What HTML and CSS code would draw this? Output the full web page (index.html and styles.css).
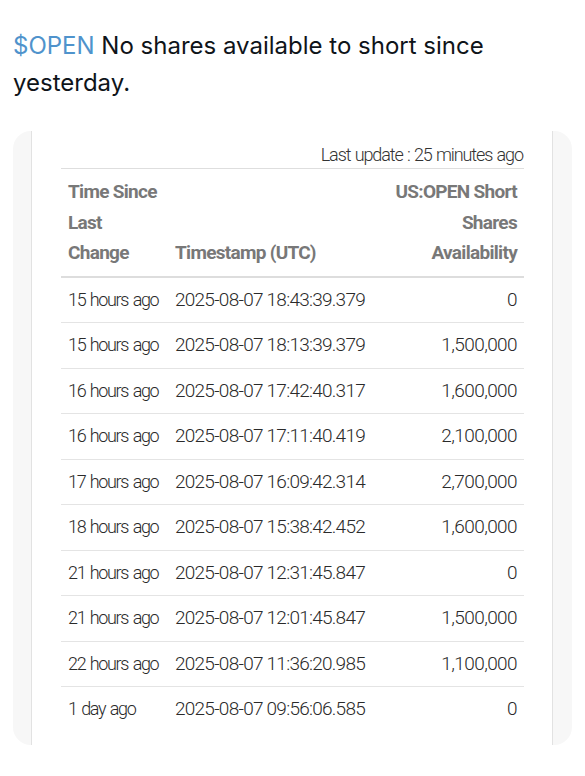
FILE: index.html
```html
<!DOCTYPE html>
<html>
<head>
<meta charset="utf-8">
<link rel="stylesheet" href="styles.css">
</head>
<body>
<div class="tweet">
  <p class="tweet-text"><span class="cashtag">$OPEN</span> <span>No shares available to short since yesterday.</span></p>
  <div class="card">
    <div class="panel">
      <div class="update">Last update : 25 minutes ago</div>
      <table class="shorts">
        <colgroup><col class="c1"><col class="c2"><col class="c3"></colgroup>
        <thead>
          <tr>
            <th>Time Since<br>Last<br>Change</th>
            <th>Timestamp (UTC)</th>
            <th class="num">US:OPEN Short<br>Shares<br>Availability</th>
          </tr>
        </thead>
        <tbody>
          <tr><td class="ago">15 hours ago</td><td class="ts">2025-08-07 18:43:39.379</td><td class="num">0</td></tr>
          <tr><td class="ago">15 hours ago</td><td class="ts">2025-08-07 18:13:39.379</td><td class="num">1,500,000</td></tr>
          <tr><td class="ago">16 hours ago</td><td class="ts">2025-08-07 17:42:40.317</td><td class="num">1,600,000</td></tr>
          <tr><td class="ago">16 hours ago</td><td class="ts">2025-08-07 17:11:40.419</td><td class="num">2,100,000</td></tr>
          <tr><td class="ago">17 hours ago</td><td class="ts">2025-08-07 16:09:42.314</td><td class="num">2,700,000</td></tr>
          <tr><td class="ago">18 hours ago</td><td class="ts">2025-08-07 15:38:42.452</td><td class="num">1,600,000</td></tr>
          <tr><td class="ago">21 hours ago</td><td class="ts">2025-08-07 12:31:45.847</td><td class="num">0</td></tr>
          <tr><td class="ago">21 hours ago</td><td class="ts">2025-08-07 12:01:45.847</td><td class="num">1,500,000</td></tr>
          <tr><td class="ago">22 hours ago</td><td class="ts">2025-08-07 11:36:20.985</td><td class="num">1,100,000</td></tr>
          <tr><td class="ago">1 day ago</td><td class="ts">2025-08-07 09:56:06.585</td><td class="num">0</td></tr>
        </tbody>
      </table>
    </div>
  </div>
</div>
</body>
</html>
```
FILE: styles.css
```css
html, body {
  margin: 0;
  padding: 0;
  background: #ffffff;
}

.tweet {
  padding: 0 13px;
  width: 559px;
}

.tweet-text {
  margin: 27px 0 0;
  font-family: "Inter", "Liberation Sans", sans-serif;
  font-size: 24px;
  line-height: 37px;
  color: #0f1419;
}

.cashtag {
  color: #4f93cc;
}

.card {
  margin-top: 30px;
  height: 614px;
  background: #f7f7f7;
  border-radius: 18px;
  overflow: hidden;
  padding: 0 19px 0 18px;
}

.panel {
  height: 100%;
  background: #ffffff;
  border-left: 1px solid #e2e2e2;
  border-right: 1px solid #e2e2e2;
  padding: 11px 28px 0 29px;
  box-sizing: border-box;
  font-family: "Roboto", "Liberation Sans", sans-serif;
}

.update {
  text-align: right;
  font-size: 18px;
  font-weight: 300;
  line-height: 26px;
  letter-spacing: -1.1px;
  word-spacing: 1px;
  color: #333333;
  border-bottom: 1px solid #dedede;
  padding-right: 1px;
}

.shorts {
  width: 100%;
  border-collapse: collapse;
  table-layout: fixed;
}

.c1 { width: 107px; }
.c2 { width: auto; }
.c3 { width: 150px; }

.shorts th {
  font-size: 19px;
  line-height: 30.5px;
  font-weight: 700;
  color: #787878;
  text-align: left;
  vertical-align: bottom;
  white-space: nowrap;
  letter-spacing: -0.7px;
  padding: 8px 7px 7px;
  border-bottom: 2px solid #dddddd;
}

.shorts td {
  font-size: 19px;
  font-weight: 300;
  line-height: 28.5px;
  color: #2a2a2a;
  padding: 8px 7px;
  white-space: nowrap;
  border-bottom: 1px solid #e4e4e4;
}

.shorts td.ago {
  font-size: 18px;
  letter-spacing: -1.35px;
  word-spacing: 1.5px;
}

.shorts td.ts {
  letter-spacing: -0.75px;
}

.shorts td.num {
  letter-spacing: -0.6px;
}

.shorts tbody tr:last-child td {
  border-bottom: none;
}

.shorts .num {
  text-align: right;
}
```
